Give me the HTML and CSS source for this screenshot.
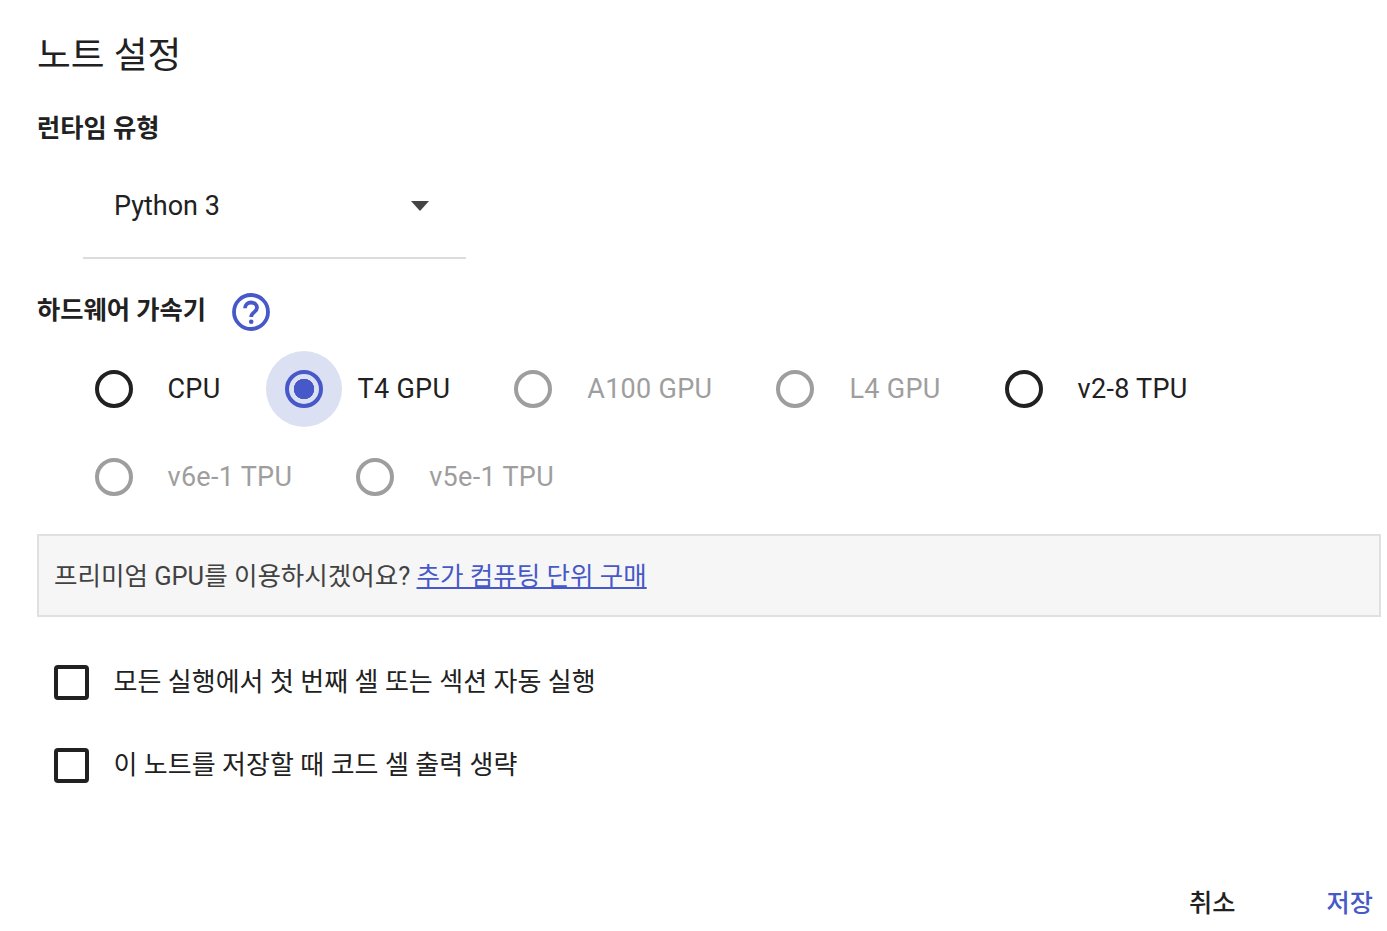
FILE: index.html
```html
<!DOCTYPE html>
<html lang="ko">
<head>
    <meta charset="UTF-8">
    <meta name="viewport" content="width=device-width, initial-scale=1.0">
    <title>노트 설정</title>
    <link rel="stylesheet" href="styles.css">
</head>
<body>
<div class="dialog">
    <h2 class="dialog-title">노트 설정</h2>

    <div class="section-label runtime-label">런타임 유형</div>
    <div class="select-box">
        <span class="select-value">Python 3</span>
        <span class="select-arrow"></span>
    </div>

    <div class="accel-head">
        <span class="section-label">하드웨어 가속기</span>
        <svg class="help-icon" viewBox="0 0 38 38" aria-hidden="true">
            <circle cx="19" cy="19" r="17" fill="none" stroke="#4759c8" stroke-width="3.8"/>
            <path d="M13 15.2c0-3.4 2.7-5.7 6-5.7s6 2.300 6 5.300c0 4.200-5.800 4.500-5.800 9.200" fill="none" stroke="#4759c8" stroke-width="3.800"/>
            <circle cx="19.200" cy="28.800" r="2.300" fill="#4759c8"/>
        </svg>
    </div>

    <div class="radio-row">
        <div class="radio-item"><span class="radio-halo"><span class="radio"></span></span><span class="radio-label">CPU</span></div>
        <div class="radio-item selected"><span class="radio-halo"><span class="radio"></span></span><span class="radio-label">T4 GPU</span></div>
        <div class="radio-item disabled"><span class="radio-halo"><span class="radio"></span></span><span class="radio-label">A100 GPU</span></div>
        <div class="radio-item disabled"><span class="radio-halo"><span class="radio"></span></span><span class="radio-label">L4 GPU</span></div>
        <div class="radio-item"><span class="radio-halo"><span class="radio"></span></span><span class="radio-label">v2-8 TPU</span></div>
    </div>
    <div class="radio-row second">
        <div class="radio-item disabled"><span class="radio-halo"><span class="radio"></span></span><span class="radio-label">v6e-1 TPU</span></div>
        <div class="radio-item disabled"><span class="radio-halo"><span class="radio"></span></span><span class="radio-label">v5e-1 TPU</span></div>
    </div>

    <div class="info-box">프리미엄 GPU를 이용하시겠어요? <a href="#">추가 컴퓨팅 단위 구매</a></div>

    <div class="check-row first">
        <span class="checkbox"></span>
        <span class="check-label">모든 실행에서 첫 번째 셀 또는 섹션 자동 실행</span>
    </div>
    <div class="check-row">
        <span class="checkbox"></span>
        <span class="check-label">이 노트를 저장할 때 코드 셀 출력 생략</span>
    </div>

    <div class="dialog-actions">
        <button class="btn">취소</button>
        <button class="btn primary">저장</button>
    </div>
</div>
</body>
</html>
```

FILE: styles.css
```css
html, body {
    margin: 0;
    height: 100%;
    background-color: #fff;
}

body {
    overflow: hidden;
    font-family: Roboto, "Noto Sans CJK KR", sans-serif;
    color: #212121;
}

.dialog {
    padding: 0 6px 0 37px;
}

.dialog-title {
    margin: 0;
    padding-top: 31px;
    height: 50px;
    line-height: 50px;
    font-size: 36.750px;
    font-weight: 400;
}

.section-label {
    font-size: 25.25px;
    font-weight: 700;
    line-height: 36px;
}

.runtime-label {
    margin-top: 30px;
}

.select-box {
    display: flex;
    align-items: center;
    justify-content: space-between;
    box-sizing: border-box;
    width: 383px;
    height: 92px;
    margin: 20px 0 0 46px;
    padding: 0 37px 12px 31px;
    border-bottom: 2px solid #dcdcdc;
    font-size: 27px;
}

.select-arrow {
    width: 0;
    height: 0;
    border-left: 9.500px solid transparent;
    border-right: 9.500px solid transparent;
    border-top: 10px solid #444;
}

.accel-head {
    display: flex;
    align-items: center;
    gap: 26px;
    height: 40px;
    margin-top: 32px;
}

.help-icon {
    width: 38px;
    height: 38px;
    margin-top: 1px;
}

.radio-row {
    display: flex;
    gap: 45px;
    margin: 19.500px 0 0 38.500px;
}

.radio-row.second {
    margin-top: 12px;
}

.radio-item {
    display: flex;
    align-items: center;
    gap: 16px;
    font-size: 27px;
    letter-spacing: 0.3px;
    color: #212121;
}

.radio-halo {
    display: flex;
    align-items: center;
    justify-content: center;
    width: 76px;
    height: 76px;
    border-radius: 50%;
}

.radio {
    box-sizing: border-box;
    width: 38px;
    height: 38px;
    border: 4px solid #212121;
    border-radius: 50%;
}

.radio-item.disabled {
    color: #9e9e9e;
}

.radio-item.disabled .radio {
    border-color: #9e9e9e;
}

.radio-item.selected .radio-halo {
    background-color: #dce0f3;
}

.radio-item.selected .radio {
    border-color: #4759c8;
    background: radial-gradient(circle, #4759c8 0 10px, transparent 10.500px);
}

.info-box {
    box-sizing: border-box;
    height: 83px;
    margin-top: 19.500px;
    padding: 0 15px;
    border: 2px solid #e0e0e0;
    background-color: #f6f6f6;
    font-size: 25.500px;
    line-height: 81px;
    color: #424242;
}

.info-box a {
    color: #4759c8;
}

.check-row {
    display: flex;
    align-items: center;
    gap: 24.500px;
    height: 36px;
    margin: 47px 0 0 17px;
    font-size: 26px;
}

.check-row.first {
    margin-top: 46px;
}

.check-label {
    margin-bottom: 3px;
}

.checkbox {
    box-sizing: border-box;
    width: 35px;
    height: 35px;
    margin-top: 3px;
    border: 4px solid #212121;
    border-radius: 4px;
}

.dialog-actions {
    display: flex;
    justify-content: flex-end;
    gap: 91px;
    margin-top: 104px;
    padding-right: 8px;
}

.btn {
    padding: 0;
    border: 0;
    background: none;
    font-family: inherit;
    font-size: 25.250px;
    font-weight: 500;
    line-height: 36px;
    color: #212121;
}

.btn.primary {
    color: #4759c8;
}
```
